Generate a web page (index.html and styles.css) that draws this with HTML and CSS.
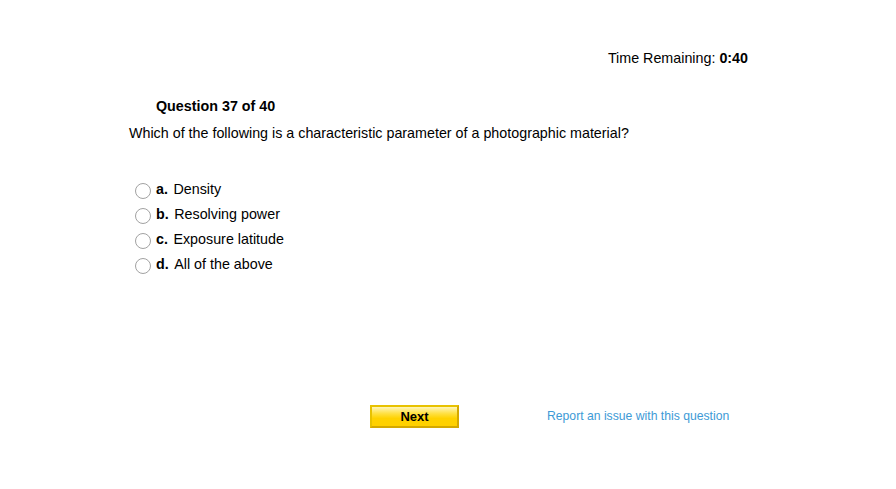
FILE: index.html
```html
<!DOCTYPE html>
<html>
<head>
<meta charset="utf-8">
<link rel="stylesheet" href="styles.css">
</head>
<body>
<div class="quiz">
  <div class="timer">Time Remaining: <b>0:40</b></div>
  <div class="qnum">Question 37 of 40</div>
  <div class="qtext">Which of the following is a characteristic parameter of a photographic material?</div>
  <ul class="options">
    <li class="option"><span class="radio"></span><b class="letter">a.</b>Density</li>
    <li class="option"><span class="radio"></span><b class="letter">b.</b>Resolving power</li>
    <li class="option"><span class="radio"></span><b class="letter">c.</b>Exposure latitude</li>
    <li class="option"><span class="radio"></span><b class="letter">d.</b>All of the above</li>
  </ul>
  <div class="actions">
    <button class="next">Next</button>
    <a class="report" href="#">Report an issue with this question</a>
  </div>
</div>
</body>
</html>
```
FILE: styles.css
```css
html, body {
  margin: 0;
  padding: 0;
  background: #fff;
}
body {
  font-family: "Liberation Sans", Arial, sans-serif;
  font-size: 14.3px;
  color: #000;
}
.quiz {
  width: 619px;
  margin-left: 129px;
  padding-top: 50px;
}
.timer {
  text-align: right;
  line-height: 16px;
}
.qnum {
  margin-top: 32px;
  margin-left: 27px;
  font-weight: bold;
  line-height: 16px;
}
.qtext {
  margin-top: 11px;
  line-height: 16px;
}
.options {
  list-style: none;
  margin: 35px 0 0 0;
  padding: 0;
}
.option {
  display: flex;
  align-items: center;
  height: 25px;
  padding-left: 6px;
}
.letter {
  margin-right: 5.5px;
}
.radio {
  box-sizing: border-box;
  width: 16px;
  height: 16px;
  border: 1px solid #a2a2a2;
  border-radius: 50%;
  background: #fff;
  margin-right: 5px;
  position: relative;
  top: 2px;
}
.actions {
  display: flex;
  align-items: center;
  margin-top: 129px;
}
.next {
  box-sizing: border-box;
  width: 89px;
  height: 23px;
  margin-left: 241px;
  padding: 0;
  border: 2px solid #d4a800;
  border-top-color: #e8c200;
  border-left-color: #e8c200;
  background: linear-gradient(to bottom, #fff6b8 0%, #ffe040 35%, #ffd200 60%, #ffd000 100%);
  font-family: "Liberation Sans", Arial, sans-serif;
  font-weight: bold;
  font-size: 13px;
  color: #000;
  cursor: pointer;
}
.report {
  margin-left: 88px;
  font-size: 12.2px;
  line-height: 14px;
  margin-top: -2px;
  color: #3d9ad6;
  text-decoration: none;
}
```
